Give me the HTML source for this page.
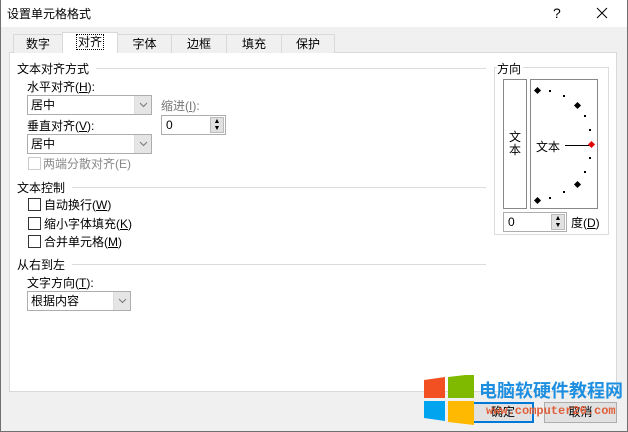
<!DOCTYPE html>
<html><head><meta charset="utf-8"><style>
*{box-sizing:border-box;margin:0;padding:0}
body{width:628px;height:432px;background:#f0f0f0;font-family:"Liberation Sans","Noto Sans CJK SC","WenQuanYi Zen Hei",sans-serif;font-size:12px;color:#000;position:relative;overflow:hidden}
.a{position:absolute;white-space:nowrap}
#win{position:absolute;left:0;top:0;width:628px;height:432px;border:1px solid #707070;border-top:none}
#title{position:absolute;left:0;top:0;width:628px;height:27px;background:#fff}
.tab{position:absolute;top:34px;height:19px;border:1px solid #d9d9d9;border-bottom:none;background:#f0f0f0;text-align:center;line-height:18px;font-size:12px}
#panel{position:absolute;left:9px;top:52px;width:608px;height:340px;background:#fff;border:1px solid #d9d9d9}
.grp{position:absolute;height:1px;background:#dcdcdc}
.sel{position:absolute;height:20px;border:1px solid #adadad;background:#fff;line-height:18px;padding-left:3px}
.sel .dd{position:absolute;right:0;top:0;width:17px;height:18px;background:#e5e5e5;border-left:1px solid #ddd}
.chk{position:absolute;width:13px;height:13px;border:1px solid #333;background:#fff}
.spin{position:absolute;height:20px;border:1px solid #adadad;background:#fff;line-height:18px;padding-left:4px}
.spin .s{position:absolute;right:1px;top:1px;width:14px;height:16px;background:#e1e1e1;border:1px solid #bbb;font-size:7px;line-height:7px;text-align:center}
.btn{position:absolute;height:21px;border:1px solid #adadad;background:#e1e1e1;text-align:center;line-height:19px}
.dot{position:absolute;width:2px;height:2px;background:#000}
.dia{position:absolute;width:5px;height:5px;background:#000;transform:rotate(45deg)}
</style></head><body>
<div id="title"></div>
<div id="win"></div>
<div class="a" style="left:7px;top:5px;font-size:12px">设置单元格格式</div>
<div class="a" style="left:553px;top:5px;font-size:14px">?</div>
<svg style="position:absolute;left:596px;top:7px" width="12" height="12"><path d="M1 1L11 11M11 1L1 11" stroke="#000" stroke-width="1"/></svg>

<div id="panel"></div>
<div class="tab" style="left:13px;width:50px">数字</div>
<div class="tab" style="left:62px;top:32px;height:21px;width:56px;background:#fff;border-color:#d9d9d9;"><span style="outline:1px dotted #000;padding:0 1px">对齐</span></div>
<div class="tab" style="left:117px;width:55px">字体</div>
<div class="tab" style="left:171px;width:56px">边框</div>
<div class="tab" style="left:226px;width:56px">填充</div>
<div class="tab" style="left:281px;width:54px">保护</div>

<div class="a" style="left:17px;top:60px">文本对齐方式</div>
<div class="grp" style="left:96px;top:68px;width:390px"></div>
<div class="a" style="left:27px;top:78px">水平对齐(<u>H</u>):</div>
<div class="sel" style="left:27px;top:95px;width:125px">居中<div class="dd"><svg width="17" height="18"><path d="M5 7l3.5 3.5L12 7" stroke="#777" fill="none"/></svg></div></div>
<div class="a" style="left:161px;top:97px;color:#777">缩进(<u>I</u>):</div>
<div class="spin" style="left:161px;top:115px;width:65px">0<div class="s">▲<br>▼</div></div>
<div class="a" style="left:27px;top:117px">垂直对齐(<u>V</u>):</div>
<div class="sel" style="left:27px;top:134px;width:125px">居中<div class="dd"><svg width="17" height="18"><path d="M5 7l3.5 3.5L12 7" stroke="#777" fill="none"/></svg></div></div>
<div class="chk" style="left:28px;top:157px;border-color:#ccc"></div>
<div class="a" style="left:43px;top:155px;color:#888">两端分散对齐(E)</div>

<div class="a" style="left:17px;top:179px">文本控制</div>
<div class="grp" style="left:72px;top:187px;width:414px"></div>
<div class="chk" style="left:28px;top:198px"></div><div class="a" style="left:44px;top:196px">自动换行(<u>W</u>)</div>
<div class="chk" style="left:28px;top:217px"></div><div class="a" style="left:44px;top:215px">缩小字体填充(<u>K</u>)</div>
<div class="chk" style="left:28px;top:235px"></div><div class="a" style="left:44px;top:233px">合并单元格(<u>M</u>)</div>

<div class="a" style="left:17px;top:256px">从右到左</div>
<div class="grp" style="left:72px;top:264px;width:414px"></div>
<div class="a" style="left:27px;top:274px">文字方向(<u>T</u>):</div>
<div class="sel" style="left:27px;top:291px;width:104px">根据内容<div class="dd"><svg width="17" height="18"><path d="M5 7l3.5 3.5L12 7" stroke="#777" fill="none"/></svg></div></div>

<div style="position:absolute;left:494px;top:67px;width:115px;height:168px;border:1px solid #dcdcdc"></div>
<div class="a" style="left:497px;top:60px;background:#fff;padding-right:2px">方向</div>
<div style="position:absolute;left:503px;top:79px;width:24px;height:130px;border:1px solid #888"></div>
<div class="a" style="left:509px;top:131px;line-height:13px;white-space:normal;width:12px">文<br>本</div>
<div style="position:absolute;left:530px;top:79px;width:68px;height:130px;border:1px solid #888"></div>
<div class="dia" style="left:535px;top:88px"></div>
<div class="dot" style="left:549px;top:90px"></div>
<div class="dot" style="left:563px;top:95px"></div>
<div class="dia" style="left:575px;top:103px"></div>
<div class="dot" style="left:584px;top:115px"></div>
<div class="dot" style="left:589px;top:129px"></div>
<div class="a" style="left:536px;top:138px">文本</div>
<div style="position:absolute;left:565px;top:145px;width:24px;height:1px;background:#000"></div>
<div class="dia" style="left:589px;top:142px;background:#e00000"></div>
<div class="dot" style="left:589px;top:157px"></div>
<div class="dot" style="left:584px;top:171px"></div>
<div class="dia" style="left:575px;top:182px"></div>
<div class="dot" style="left:563px;top:191px"></div>
<div class="dot" style="left:549px;top:197px"></div>
<div class="dia" style="left:535px;top:198px"></div>
<div class="spin" style="left:503px;top:212px;width:64px">0<div class="s">▲<br>▼</div></div>
<div class="a" style="left:571px;top:214px">度(<u>D</u>)</div>

<div class="btn" style="left:472px;top:402px;width:62px;border:2px solid #0078d7;line-height:17px">确定</div>
<div class="btn" style="left:544px;top:402px;width:73px">取消</div>

<svg style="position:absolute;left:424px;top:375px" width="52" height="50">
<path d="M0 5L21 2V23H0Z" fill="#f25022"/><path d="M24 2L50 -1V23H24Z" fill="#7fba00"/>
<path d="M0 26H21V46L0 43Z" fill="#00a4ef"/><path d="M24 26H50V50L24 47Z" fill="#ffb900"/></svg>
<div class="a" style="left:479px;top:377px;font-size:18px;font-weight:bold;color:#1e8fe0">电脑软硬件教程网</div>
<div class="a" style="left:486px;top:404px;font-size:12px;font-weight:bold;color:#e0603a;font-family:'Liberation Mono',monospace">www.computer26.com</div>
</body></html>
